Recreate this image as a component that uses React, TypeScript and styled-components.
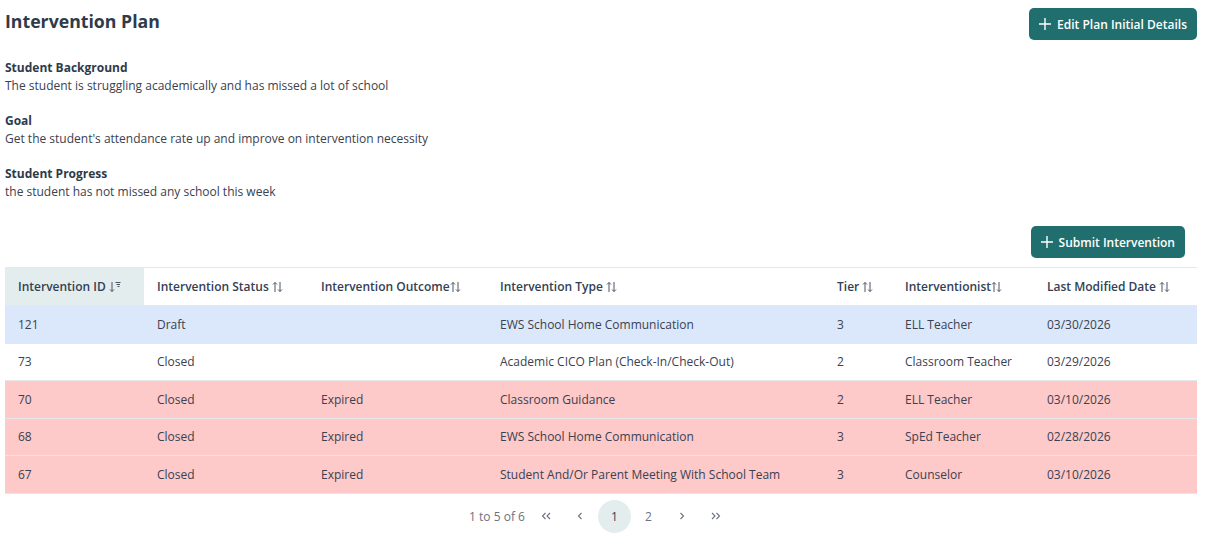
import React from "react";
import styled, { createGlobalStyle } from "styled-components";

const GlobalStyle = createGlobalStyle`
  body {
    margin: 0;
    background: #ffffff;
    font-family: "Open Sans", "Noto Sans", sans-serif;
    color: #334155;
  }
`;

type Row = {
  id: string;
  status: string;
  outcome: string;
  type: string;
  tier: string;
  interventionist: string;
  date: string;
  tone: "draft" | "plain" | "expired";
};

const rows: Row[] = [
  { id: "121", status: "Draft", outcome: "", type: "EWS School Home Communication", tier: "3", interventionist: "ELL Teacher", date: "03/30/2026", tone: "draft" },
  { id: "73", status: "Closed", outcome: "", type: "Academic CICO Plan (Check-In/Check-Out)", tier: "2", interventionist: "Classroom Teacher", date: "03/29/2026", tone: "plain" },
  { id: "70", status: "Closed", outcome: "Expired", type: "Classroom Guidance", tier: "2", interventionist: "ELL Teacher", date: "03/10/2026", tone: "expired" },
  { id: "68", status: "Closed", outcome: "Expired", type: "EWS School Home Communication", tier: "3", interventionist: "SpEd Teacher", date: "02/28/2026", tone: "expired" },
  { id: "67", status: "Closed", outcome: "Expired", type: "Student And/Or Parent Meeting With School Team", tier: "3", interventionist: "Counselor", date: "03/10/2026", tone: "expired" },
];

const columns = [
  { label: "Intervention ID", width: 139, sorted: true, tight: false },
  { label: "Intervention Status", width: 164, sorted: false, tight: false },
  { label: "Intervention Outcome", width: 179, sorted: false, tight: true },
  { label: "Intervention Type", width: 337, sorted: false, tight: false },
  { label: "Tier", width: 68, sorted: false, tight: false },
  { label: "Interventionist", width: 142, sorted: false, tight: true },
  { label: "Last Modified Date", width: 163, sorted: false, tight: false },
];

const Page = styled.div`
  padding: 8px 8px 0 5px;
`;

const TopBar = styled.div`
  display: flex;
  justify-content: space-between;
  align-items: flex-start;
`;

const Title = styled.h1`
  margin: 2px 0 0;
  font-size: 17.7px;
  line-height: 22px;
  font-weight: 700;
  color: #2f3a4a;
`;

const ActionButton = styled.button<{ $offset?: number }>`
  display: inline-flex;
  align-items: center;
  gap: 5px;
  height: 32px;
  padding: 0 10px 0 9px;
  margin-right: ${(p) => p.$offset ?? 0}px;
  border: none;
  border-radius: 5px;
  background: #216e6e;
  color: #ffffff;
  font-family: inherit;
  font-size: 12px;
  font-weight: 600;
  cursor: pointer;
`;

const Sections = styled.div`
  display: flex;
  flex-direction: column;
  gap: 17px;
  margin-top: 19px;
`;

const Section = styled.div`
  font-size: 12px;
  line-height: 18px;
`;

const Label = styled.div`
  font-weight: 700;
  color: #2f3a4a;
`;

const Text = styled.div`
  color: #3a4150;
`;

const SubmitBar = styled.div`
  display: flex;
  justify-content: flex-end;
  margin-top: 25px;
  margin-bottom: 9px;
`;

const Table = styled.table`
  width: 100%;
  border-collapse: collapse;
  table-layout: fixed;
  border-top: 1px solid #e5e7eb;
  font-size: 12px;
`;

const HeadCell = styled.th<{ $active?: boolean }>`
  height: 37px;
  padding: 0 0 0 13px;
  text-align: left;
  font-weight: 600;
  color: #334155;
  background: ${(p) => (p.$active ? "#e4eded" : "#ffffff")};
  white-space: nowrap;
  border-bottom: 1px solid #e5e7eb;
`;

const HeadInner = styled.span<{ $tight?: boolean }>`
  display: inline-flex;
  align-items: center;
  gap: ${(p) => (p.$tight ? 0 : 3)}px;
`;

const toneBg = {
  draft: "#dbe8fb",
  plain: "#ffffff",
  expired: "#fdc9c9",
};

const BodyRow = styled.tr<{ $tone: Row["tone"] }>`
  background: ${(p) => toneBg[p.$tone]};
  border-bottom: 1px solid #e5e7eb;
`;

const Cell = styled.td`
  height: 36.5px;
  padding: 0 0 0 13px;
  color: #3a4150;
  white-space: nowrap;
`;

const Pager = styled.div`
  display: flex;
  justify-content: center;
  align-items: center;
  gap: 1px;
  margin-top: 6px;
  font-size: 12px;
  color: #6b7280;
`;

const PageInfo = styled.span`
  margin-right: 4px;
`;

const PageButton = styled.button<{ $current?: boolean }>`
  width: 33px;
  height: 33px;
  border: none;
  border-radius: 50%;
  display: inline-flex;
  align-items: center;
  justify-content: center;
  background: ${(p) => (p.$current ? "#e4eded" : "transparent")};
  color: ${(p) => (p.$current ? "#334155" : "#6b7280")};
  font-family: inherit;
  font-size: 12px;
  padding: 0;
`;

const Plus = () => (
  <svg width="14" height="14" viewBox="0 0 14 14" fill="none" stroke="#fff" strokeWidth="1.4">
    <path d="M7 1v12M1 7h12" />
  </svg>
);

const SortBoth = () => (
  <svg width="11" height="12" viewBox="0 0 11 12" fill="none" stroke="#4b5563" strokeWidth="1">
    <path d="M3 11V1.5M1 3.5l2-2 2 2" />
    <path d="M8 1v9.5M6 8.5l2 2 2-2" />
  </svg>
);

const SortDown = () => (
  <svg width="12" height="12" viewBox="0 0 12 12" fill="none" stroke="#4b5563" strokeWidth="1">
    <path d="M3 1v9.5M1 8.5l2 2 2-2" />
    <path d="M6.5 1.5h5M7.5 3.5h3.5M8.5 5.5h2" />
  </svg>
);

const Chevron = ({ double, left }: { double?: boolean; left?: boolean }) => (
  <svg width="12" height="10" viewBox="0 0 12 10" fill="none" stroke="#6b7280" strokeWidth="1.1">
    <g transform={left ? "translate(12 0) scale(-1 1)" : undefined}>
      {double ? (
        <>
          <path d="M2 2l3 3-3 3" />
          <path d="M6.5 2l3 3-3 3" />
        </>
      ) : (
        <path d="M4.5 2l3 3-3 3" />
      )}
    </g>
  </svg>
);

const App = () => {
  return (
    <Page>
      <GlobalStyle />
      <TopBar>
        <Title>Intervention Plan</Title>
        <ActionButton>
          <Plus />
          Edit Plan Initial Details
        </ActionButton>
      </TopBar>
      <Sections>
        <Section>
          <Label>Student Background</Label>
          <Text>The student is struggling academically and has missed a lot of school</Text>
        </Section>
        <Section>
          <Label>Goal</Label>
          <Text>Get the student's attendance rate up and improve on intervention necessity</Text>
        </Section>
        <Section>
          <Label>Student Progress</Label>
          <Text>the student has not missed any school this week</Text>
        </Section>
      </Sections>
      <SubmitBar>
        <ActionButton $offset={12}>
          <Plus />
          Submit Intervention
        </ActionButton>
      </SubmitBar>
      <Table>
        <colgroup>
          {columns.map((c) => (
            <col key={c.label} style={{ width: c.width }} />
          ))}
        </colgroup>
        <thead>
          <tr>
            {columns.map((c) => (
              <HeadCell key={c.label} $active={c.sorted}>
                <HeadInner $tight={c.tight}>
                  {c.label}
                  {c.sorted ? <SortDown /> : <SortBoth />}
                </HeadInner>
              </HeadCell>
            ))}
          </tr>
        </thead>
        <tbody>
          {rows.map((r) => (
            <BodyRow key={r.id} $tone={r.tone}>
              <Cell>{r.id}</Cell>
              <Cell>{r.status}</Cell>
              <Cell>{r.outcome}</Cell>
              <Cell>{r.type}</Cell>
              <Cell>{r.tier}</Cell>
              <Cell>{r.interventionist}</Cell>
              <Cell>{r.date}</Cell>
            </BodyRow>
          ))}
        </tbody>
      </Table>
      <Pager>
        <PageInfo>1 to 5 of 6</PageInfo>
        <PageButton>
          <Chevron double left />
        </PageButton>
        <PageButton>
          <Chevron left />
        </PageButton>
        <PageButton $current>1</PageButton>
        <PageButton>2</PageButton>
        <PageButton>
          <Chevron />
        </PageButton>
        <PageButton>
          <Chevron double />
        </PageButton>
      </Pager>
    </Page>
  );
};

export default App;
